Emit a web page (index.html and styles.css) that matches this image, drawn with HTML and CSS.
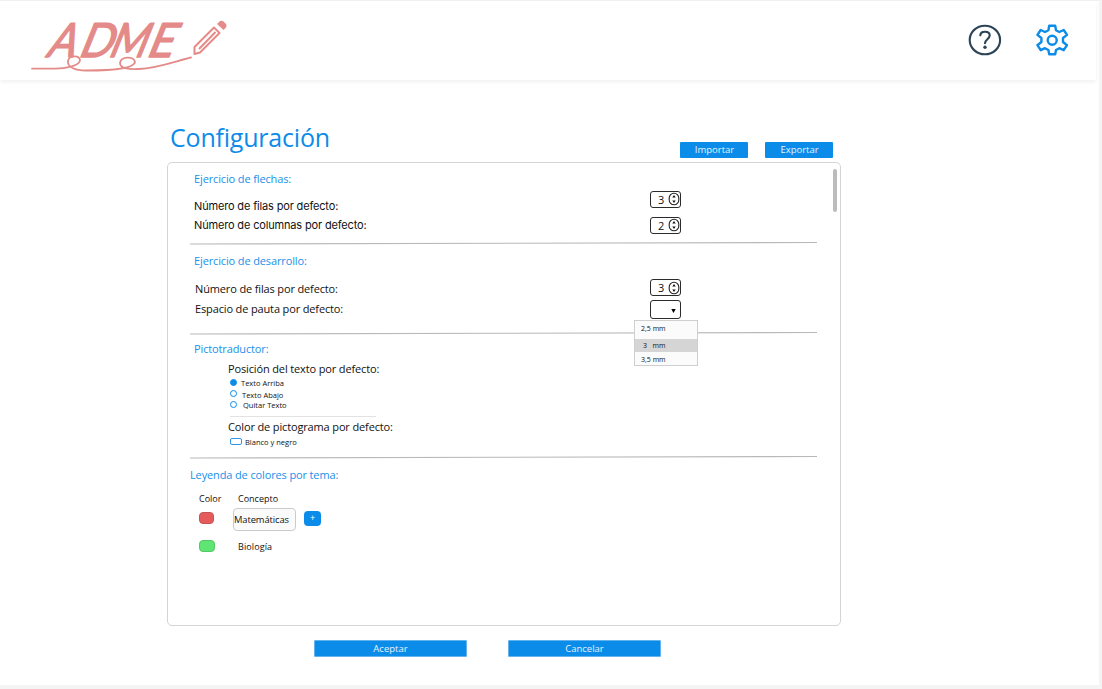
FILE: index.html
```html
<!DOCTYPE html>
<html lang="es">
<head>
<meta charset="utf-8">
<title>ADME - Configuración</title>
<link rel="stylesheet" href="styles.css">
</head>
<body>
<div class="page">
  <header class="header">
    <svg class="logo" width="220" height="79" viewBox="30 1 220 79" role="img" aria-label="ADME">
      <g class="logo-text" transform="translate(0 57) skewX(-22)">
        <text x="45" y="0" textLength="28" lengthAdjust="spacingAndGlyphs">A</text>
        <text x="77" y="0" textLength="33" lengthAdjust="spacingAndGlyphs">D</text>
        <text x="107" y="0" textLength="37" lengthAdjust="spacingAndGlyphs">M</text>
        <text x="145" y="0" textLength="26" lengthAdjust="spacingAndGlyphs">E</text>
      </g>
      <path class="logo-line" d="M32 68.600H53C65 69 80 66 80 60C79 55 69 55 68 61C67 67 75 70.500 86 70.500C107 70.500 134 69 135 62C134 56 121 56 120 63C120 69 130 69.500 139 69C158 68 176 61 191 57.500"/>
      <path class="logo-pencil" d="M194.500 54V47L214 27.500L219.500 33L200 52.500ZM199 49L215.500 32"/>
      <path class="logo-cap" d="M219 22Q221 20 223.500 21.500L226 24Q227.500 26 225.500 28L223.500 30L217 24Z"/>
    </svg>
    <nav class="tools">
      <svg width="34" height="34" viewBox="968 23 34 34" class="help">
        <ellipse cx="984.900" cy="40" rx="15.200" ry="14.300"/>
        <path d="M980.300 35.300C980.700 30.500 989.800 30.700 989.700 35.600C989.600 39 985 39.700 985 43.300"/>
        <circle class="help-dot" cx="985" cy="47.300" r="1.700"/>
      </svg>
      <svg width="34" height="34" viewBox="1035 23 34 34" class="gear">
        <path d="M1049.200 25.800H1055.200L1056 30.300L1059.300 32L1063.700 30L1067 34.900L1063 38V42L1067 45.200L1063.700 50.200L1059.300 48.200L1056 50L1055.200 54.200H1049.200L1048.400 50L1045 48.200L1040.700 50.200L1037.400 45.200L1041.400 42V38L1037.400 34.900L1040.700 30L1045 32L1048.400 30.300Z"/>
        <circle cx="1052.200" cy="40.200" r="4.500"/>
      </svg>
    </nav>
  </header>

  <main class="main">
    <div class="heading">
      <h1>Configuración</h1>
      <div class="heading-actions">
        <button class="btn">Importar</button>
        <button class="btn">Exportar</button>
      </div>
    </div>

    <div class="panel">
      <div class="sections">
        <section class="section arrows">
          <div class="labels">
            <h2>Ejercicio de flechas:</h2>
            <p class="label inter">Número de filas por defecto:</p>
            <p class="label inter">Número de columnas por defecto:</p>
          </div>
          <div class="controls">
            <div class="number"><span>3</span><svg class="spin" width="12" height="14" viewBox="0 0 12 14"><rect x="1.200" y="1.200" width="9.600" height="11.600" rx="4.800"/><path d="M6 3L7.700 5.500H4.300ZM6 11L7.700 8.500H4.300Z"/></svg></div>
            <div class="number"><span>2</span><svg class="spin" width="12" height="14" viewBox="0 0 12 14"><rect x="1.200" y="1.200" width="9.600" height="11.600" rx="4.800"/><path d="M6 3L7.700 5.500H4.300ZM6 11L7.700 8.500H4.300Z"/></svg></div>
          </div>
        </section>
        <svg class="divider" width="627" height="3"><path d="M0 2L627 .500"/></svg>

        <section class="section writing">
          <div class="labels">
            <h2>Ejercicio de desarrollo:</h2>
            <p class="label">Número de filas por defecto:</p>
            <p class="label">Espacio de pauta por defecto:</p>
          </div>
          <div class="controls">
            <div class="number"><span>3</span><svg class="spin" width="12" height="14" viewBox="0 0 12 14"><rect x="1.200" y="1.200" width="9.600" height="11.600" rx="4.800"/><path d="M6 3L7.700 5.500H4.300ZM6 11L7.700 8.500H4.300Z"/></svg></div>
            <div class="select">
              <svg width="5" height="4" viewBox="0 0 5 4"><path d="M.300 0H4.700L2.500 4Z"/></svg>
              <ul class="menu">
                <li>2,5 mm</li>
                <li class="selected">3 &nbsp; mm</li>
                <li>3,5 mm</li>
              </ul>
            </div>
          </div>
        </section>
        <svg class="divider" width="627" height="3"><path d="M0 2L627 .500"/></svg>

        <section class="section picto">
          <div class="labels">
            <h2>Pictotraductor:</h2>
            <div class="picto-body">
              <h3>Posición del texto por defecto:</h3>
              <p class="option first"><i class="radio on"></i><span>Texto Arriba</span></p>
              <p class="option second"><i class="radio"></i><span>Texto Abajo</span></p>
              <p class="option third"><i class="radio"></i><span>Quitar Texto</span></p>
              <hr>
              <h3>Color de pictograma por defecto:</h3>
              <p class="option check"><i class="box"></i><span>Blanco y negro</span></p>
            </div>
          </div>
        </section>
        <svg class="divider" width="627" height="3"><path d="M0 2L627 .500"/></svg>

        <section class="legend">
          <h2>Leyenda de colores por tema:</h2>
          <div class="legend-row legend-head"><span>Color</span><span>Concepto</span></div>
          <div class="legend-row legend-edit"><i class="swatch red"></i><span class="field">Matemáticas</span><button class="add">+</button></div>
          <div class="legend-row legend-item"><i class="swatch green"></i><span>Biología</span></div>
        </section>
      </div>
      <div class="scrollbar"></div>
    </div>

    <div class="footer">
      <button class="btn">Aceptar</button>
      <button class="btn">Cancelar</button>
    </div>
  </main>
</div>
</body>
</html>
```
FILE: styles.css
```css
* { box-sizing: border-box; margin: 0; padding: 0; }
body { background: #f4f4f4; font-family: "Open Sans", sans-serif; color: #111; overflow: hidden; }
svg { display: block; flex: none; }
button { border: 0; font-family: inherit; }
ul { list-style: none; }

.page { width: 1099px; height: 685px; background: #fff; border-top: 1px solid #f1f1f1; }
.header { display: flex; justify-content: space-between; width: 1096px; height: 79px; padding: 0 27px 0 30px; box-shadow: 0 2px 4px rgba(0, 0, 0, .06); }
.logo-text { font-family: Lato, sans-serif; font-size: 47px; font-weight: 400; fill: #e48b89; }
.logo-text text { stroke: #e48b89; stroke-width: 1.5; stroke-linejoin: round; }
.logo-line { fill: none; stroke: #e48b89; stroke-width: 1.8; stroke-linecap: round; }
.logo-pencil { fill: none; stroke: #e48b89; stroke-width: 2; stroke-linejoin: round; }
.logo-cap { fill: #e48b89; }
.tools { display: flex; gap: 33px; padding-top: 22px; }
.help { fill: none; stroke: #2c4456; stroke-width: 2.1; stroke-linecap: round; }
.help .help-dot { fill: #2c4456; stroke: none; }
.gear { fill: none; stroke: #0c8ce9; stroke-width: 2.4; stroke-linejoin: round; }

.main { width: 674px; margin-left: 167px; }
.heading { display: flex; justify-content: space-between; height: 81px; padding: 37px 8px 0 3px; }
h1 { font-size: 25px; line-height: 40px; font-weight: 400; color: #0c8ce9; letter-spacing: -.2px; }
h2 { font-size: 11px; line-height: 16px; font-weight: 400; color: #2190e9; letter-spacing: -.13px; white-space: nowrap; }
h3 { font-size: 11px; line-height: 16px; font-weight: 400; letter-spacing: -.14px; white-space: nowrap; }
.heading-actions { display: flex; gap: 17px; padding-top: 25px; }
.btn { width: 68px; height: 16px; background: #0c8ce9; border-radius: 1px; color: #e4f2fd; font-size: 9.5px; line-height: 16px; text-align: center; }
.heading-actions .btn { padding-left: 1px; }

.panel { display: flex; justify-content: space-between; height: 464px; margin-top: 1px; border: 1px solid #d4d4d4; border-radius: 5px; padding-right: 3px; }
.sections { width: 650px; padding-left: 22px; }
.scrollbar { width: 4px; height: 43px; margin-top: 6px; border-radius: 2px; background: #bcbcbc; }
.section { display: flex; justify-content: space-between; padding-left: 4px; }
.divider path { fill: none; stroke: #b9b9b9; stroke-width: 1.2; }
.label { font-size: 11px; line-height: 20px; letter-spacing: -.14px; white-space: nowrap; }
.inter { font-family: Inter, sans-serif; line-height: 19px; letter-spacing: -.16px; }
.controls { width: 168px; }

.number, .select { display: flex; align-items: center; width: 31px; height: 17px; border: 1.3px solid #2b2b2b; border-radius: 3px; }
.number { justify-content: space-between; padding-left: 7px; font-size: 11px; line-height: 15px; }
.spin rect { fill: none; stroke: #222; stroke-width: 1.1; }
.spin path { fill: #111; }

.arrows { height: 79px; padding-top: 8px; }
.arrows h2 { margin-bottom: 10px; }
.arrows .controls { padding-top: 19.500px; }
.arrows .number + .number { margin-top: 9px; }
.writing { height: 87px; padding-top: 8px; }
.writing h2 { margin-bottom: 10px; }
.writing .label { padding-left: 1px; }
.writing .controls { padding-top: 26px; }
.select { position: relative; justify-content: flex-end; height: 19px; margin-top: 4px; padding: 2px 4px 0 0; }
.menu { position: absolute; left: -17px; top: 19px; width: 64px; height: 46px; background: #fbfbfb; border: 1px solid #cfcfcf; font-size: 7px; z-index: 2; }
.menu li { height: 13px; padding-left: 6px; line-height: 14px; white-space: nowrap; }
.menu li:first-child { height: 18px; line-height: 16px; }
.menu .selected { background: #d5d5d5; padding-left: 8px; }
.menu li:last-child { line-height: 15px; }

.picto { height: 121px; padding-top: 6px; }
.picto-body { padding: 4px 0 0 34px; }
.option { display: flex; align-items: center; height: 11px; padding-left: 2px; font-size: 7.5px; white-space: nowrap; }
.radio { flex: none; width: 7px; height: 7px; border: 1px solid #0c8ce9; border-radius: 50%; }
.radio.on { background: #0c8ce9; }
.option span { margin-left: 4px; }
.second span { margin-left: 5px; padding-top: 2px; }
.third span { margin-left: 6px; }
hr { width: 146px; margin: 6px 0 2px 2px; border: 0; border-top: 1px solid #e2e2e2; }
.box { width: 12px; height: 7px; border: 1px solid #2b97ea; border-radius: 2px; }
.check { margin-top: 1px; }
.check span { margin-left: 3px; }

.legend { padding-top: 8px; }
.legend-row { display: flex; align-items: center; padding-left: 9px; font-size: 9px; }
.legend-head { height: 16px; margin-top: 7px; }
.legend-head span:first-child { width: 39px; }
.swatch { width: 15px; height: 12px; border-radius: 4px; border: 1px solid #c45556; }
.red { margin-top: -2px; background: #e55b5c; }
.green { width: 16px; background: #5ee573; border-color: #55c768; }
.legend-edit { height: 24px; margin-top: 1px; }
.field { width: 63px; height: 23px; margin: 0 8px 0 19px; border: 1px solid #cbcbcb; border-radius: 4px; background: #fbfbfb; line-height: 21px; font-size: 9.4px; letter-spacing: -.1px; white-space: nowrap; }
.add { width: 17px; height: 15px; margin-top: -2px; border-radius: 4px; background: #0c8ce9; color: #fff; font-size: 9px; line-height: 14px; }
.legend-item { height: 18px; margin-top: 6px; }
.legend-item span { margin-left: 23px; letter-spacing: .1px; }

.footer { display: flex; gap: 41px; padding: 14px 0 0 147px; }
.footer .btn { width: 153px; height: 17px; border: 1px solid #62b3f0; line-height: 15px; }
```
